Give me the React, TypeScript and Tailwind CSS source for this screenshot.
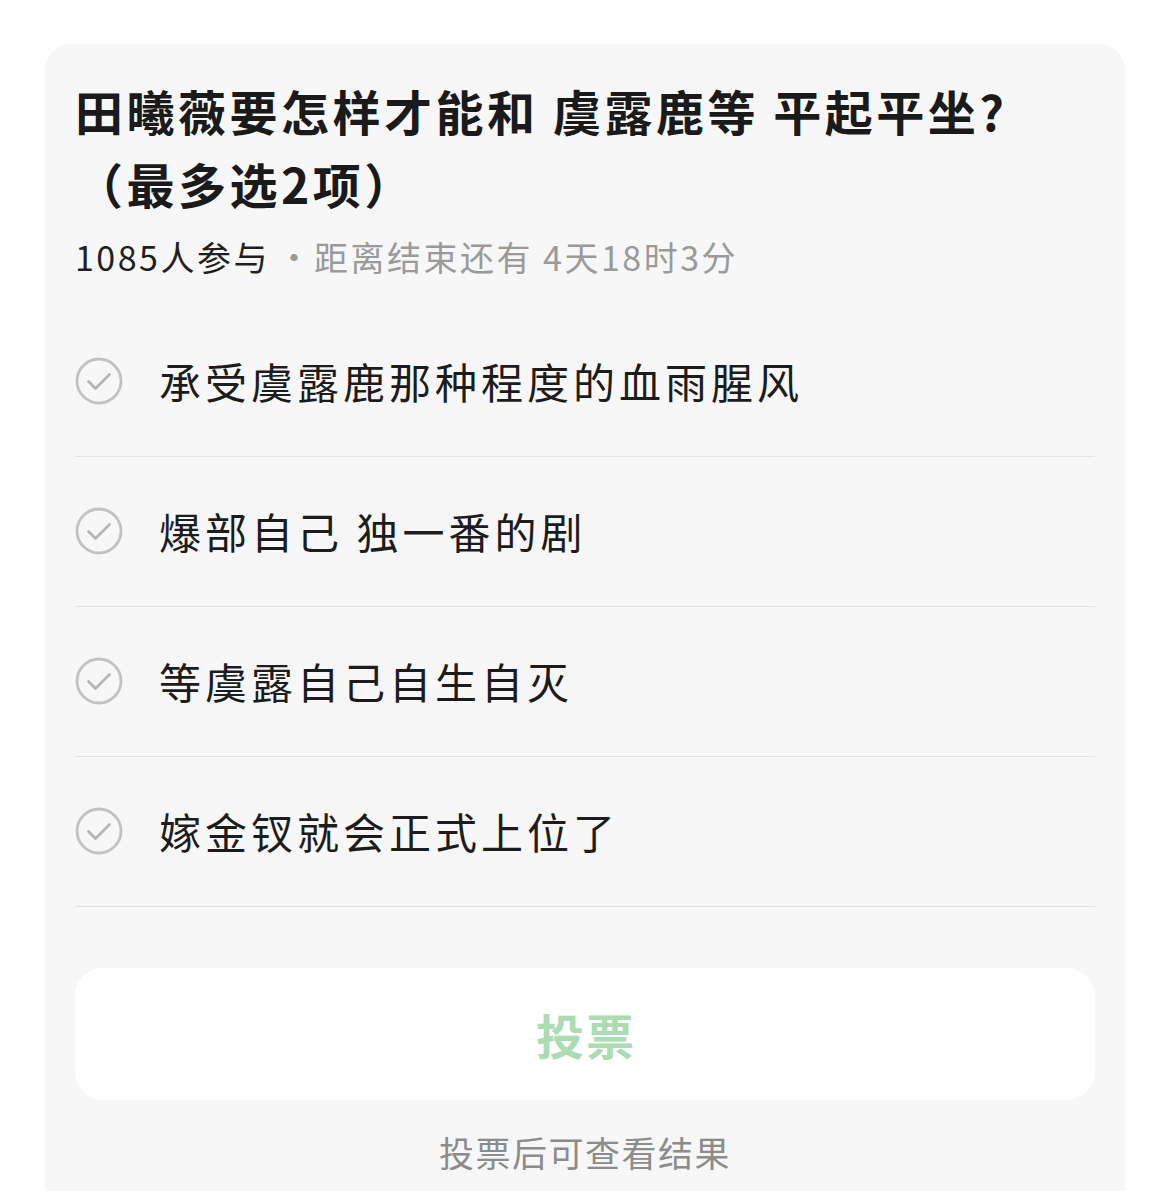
import React from "react";

const options = [
  "承受虞露鹿那种程度的血雨腥风",
  "爆部自己 独一番的剧",
  "等虞露自己自生自灭",
  "嫁金钗就会正式上位了",
];

function CheckCircle() {
  return (
    <svg width="48" height="48" viewBox="0 0 48 48" className="shrink-0">
      <circle cx="24" cy="24" r="22" fill="none" stroke="#c2c2c2" strokeWidth="2.8" />
      <path d="M13.5 24.5 L20.5 31.5 L34.5 17.5" fill="none" stroke="#b5b5b5" strokeWidth="2.8" strokeLinecap="round" strokeLinejoin="round" />
    </svg>
  );
}

export default function App() {
  return (
    <div
      className="w-[1170px] h-[1191px] bg-white overflow-hidden"
      style={{ fontFamily: '"Noto Sans CJK SC", "Noto Sans", sans-serif' }}
    >
      <div className="ml-[45px] mt-[44px] w-[1080px] h-[1147px] bg-[#f7f7f7] rounded-t-[26px] px-[30px] pt-[30px]">
        <div className="text-[48px] leading-[73px] font-bold text-[#1a1a1a] tracking-[3.5px]">
          田曦薇要怎样才能和 虞露鹿等 平起平坐?
          <br />
          <span>（最多选2项）</span>
        </div>
        <div className="mt-[17px] text-[34px] leading-[40px] flex items-center">
          <span className="text-[#1f1f1f] tracking-[2.5px]">1085人参与</span>
          <span className="text-[#9a9a9a] ml-[7px]">·</span>
          <span className="text-[#9a9a9a] ml-[3px] tracking-[2.5px]">距离结束还有 4天18时3分</span>
        </div>
        <div className="mt-[30px]">
          {options.map((o) => (
            <div key={o} className="h-[150px] flex items-center border-b border-[#e2e2e2] pb-[1px]">
              <CheckCircle />
              <span className="ml-[36px] text-[42px] text-[#1c1c1c] leading-none tracking-[4px]">{o}</span>
            </div>
          ))}
        </div>
        <div className="mt-[61px] h-[132px] bg-white rounded-[28px] flex items-center justify-center">
          <span className="text-[48px] font-semibold text-[#abdcb4] leading-none tracking-[2px] pl-[2px]">投票</span>
        </div>
        <div className="mt-[32px] text-center text-[35px] leading-[40px] text-[#8c8c8c] tracking-[1.5px]">
          投票后可查看结果
        </div>
      </div>
    </div>
  );
}
